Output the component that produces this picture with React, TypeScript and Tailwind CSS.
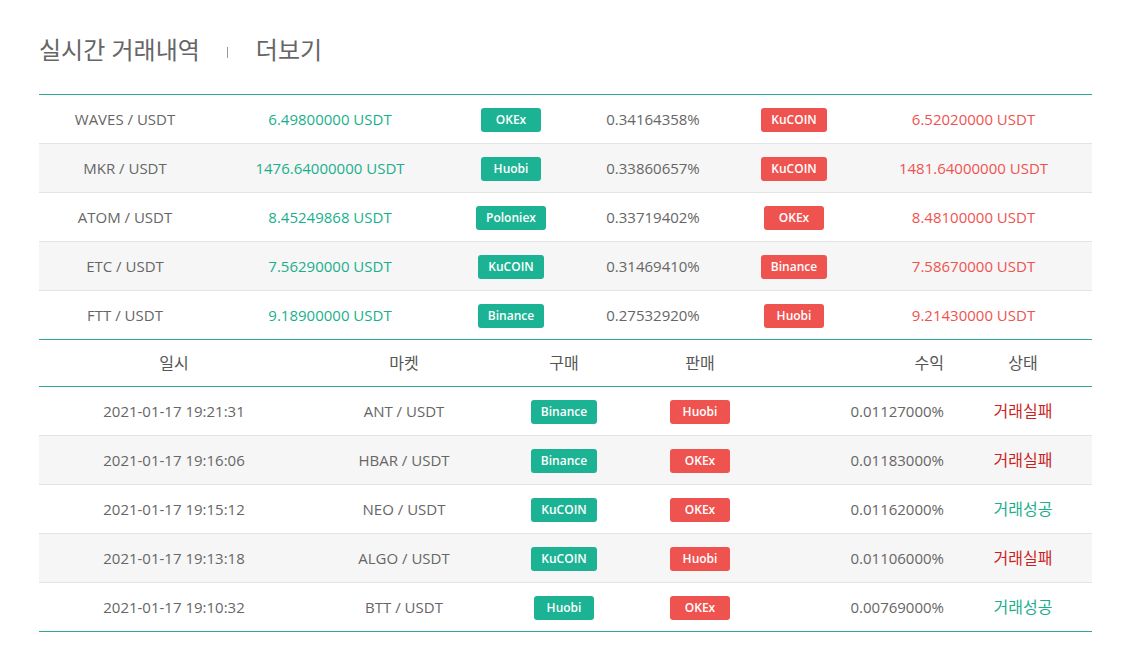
import React from "react";

const GREEN = "bg-[#1cb394]";
const RED = "bg-[#ef5350]";

function Badge({ label, color }: { label: string; color: "g" | "r" }) {
  return (
    <span
      className={`inline-flex h-6 min-w-[60px] items-center justify-center rounded-[3px] px-[10px] text-[12px] font-semibold text-white ${
        color === "g" ? GREEN : RED
      }`}
    >
      {label}
    </span>
  );
}

const top = [
  ["WAVES / USDT", "6.49800000 USDT", "OKEx", "0.34164358%", "KuCOIN", "6.52020000 USDT"],
  ["MKR / USDT", "1476.64000000 USDT", "Huobi", "0.33860657%", "KuCOIN", "1481.64000000 USDT"],
  ["ATOM / USDT", "8.45249868 USDT", "Poloniex", "0.33719402%", "OKEx", "8.48100000 USDT"],
  ["ETC / USDT", "7.56290000 USDT", "KuCOIN", "0.31469410%", "Binance", "7.58670000 USDT"],
  ["FTT / USDT", "9.18900000 USDT", "Binance", "0.27532920%", "Huobi", "9.21430000 USDT"],
];

const bottom = [
  ["2021-01-17 19:21:31", "ANT / USDT", "Binance", "Huobi", "0.01127000%", "거래실패"],
  ["2021-01-17 19:16:06", "HBAR / USDT", "Binance", "OKEx", "0.01183000%", "거래실패"],
  ["2021-01-17 19:15:12", "NEO / USDT", "KuCOIN", "OKEx", "0.01162000%", "거래성공"],
  ["2021-01-17 19:13:18", "ALGO / USDT", "KuCOIN", "Huobi", "0.01106000%", "거래실패"],
  ["2021-01-17 19:10:32", "BTT / USDT", "Huobi", "OKEx", "0.00769000%", "거래성공"],
];

export default function App() {
  return (
    <div
      className="min-h-[665px] w-full bg-white text-[15px] text-[#666666]"
      style={{ fontFamily: '"Open Sans", "Noto Sans CJK KR", sans-serif' }}
    >
      <div className="mx-[39px] w-[1053px] pt-[35px]">
        <div className="flex h-[30px] items-center text-[24px] leading-[30px] text-[#666666]">
          <span>실시간 거래내역</span>
          <span className="ml-[27px] mr-[28px] mt-[4px] h-[11px] w-px bg-[#999999]" />
          <span>더보기</span>
        </div>

        <div className="mt-[29px] border-t border-[#2aa795]">
          {top.map((r, i) => (
            <div
              key={i}
              className={`grid h-[49px] grid-cols-[172px_238px_124px_160px_122px_237px] items-center border-b text-center ${
                i % 2 === 1 ? "bg-[#f6f6f6]" : "bg-white"
              } ${i < top.length - 1 ? "border-[#e3e3e3]" : "border-[#2aa795]"}`}
            >
              <div>{r[0]}</div>
              <div className="text-[#1aaf8c]">{r[1]}</div>
              <div>
                <Badge label={r[2]} color="g" />
              </div>
              <div>{r[3]}</div>
              <div>
                <Badge label={r[4]} color="r" />
              </div>
              <div className="text-[#ef5350]">{r[5]}</div>
            </div>
          ))}
        </div>

        <div>
          <div className="grid h-[47px] grid-cols-[270px_190px_130px_142px_183px_138px] items-center border-b border-[#2aa795] text-center text-[16px] text-[#555555]">
            <div>일시</div>
            <div>마켓</div>
            <div>구매</div>
            <div>판매</div>
            <div className="pr-[10px] text-right">수익</div>
            <div>상태</div>
          </div>
          {bottom.map((r, i) => (
            <div
              key={i}
              className={`grid h-[49px] grid-cols-[270px_190px_130px_142px_183px_138px] items-center border-b text-center ${
                i % 2 === 1 ? "bg-[#f6f6f6]" : "bg-white"
              } ${i < bottom.length - 1 ? "border-[#e3e3e3]" : "border-[#2aa795]"}`}
            >
              <div>{r[0]}</div>
              <div>{r[1]}</div>
              <div>
                <Badge label={r[2]} color="g" />
              </div>
              <div>
                <Badge label={r[3]} color="r" />
              </div>
              <div className="pr-[10px] text-right">{r[4]}</div>
              <div
                className={`text-[16px] ${
                  r[5] === "거래실패" ? "text-[#cc1f1f]" : "text-[#1aaf8c]"
                }`}
              >
                {r[5]}
              </div>
            </div>
          ))}
        </div>
      </div>
    </div>
  );
}
